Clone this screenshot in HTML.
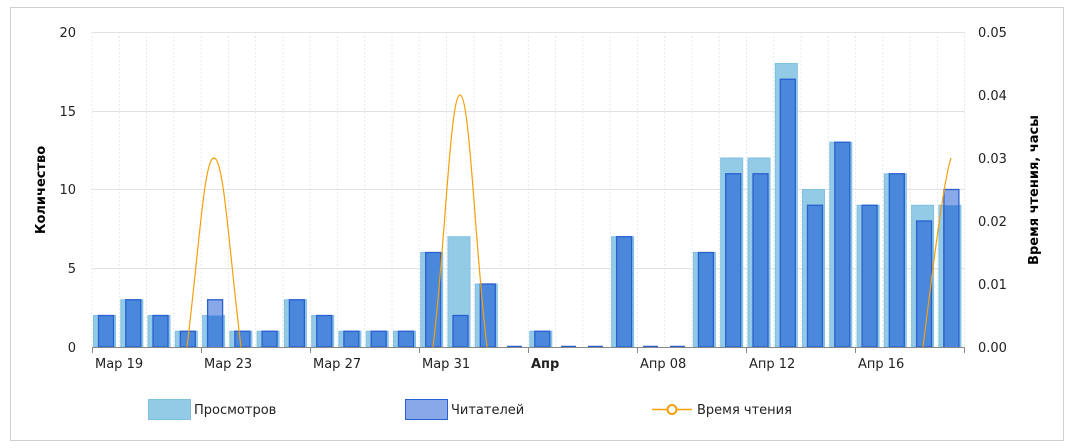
<!DOCTYPE html>
<html><head><meta charset="utf-8"><style>
html,body{margin:0;padding:0;background:#fff;}
svg{display:block;font-family:"DejaVu Sans","Liberation Sans",sans-serif;}
</style></head><body>
<svg width="1072" height="448" viewBox="0 0 1072 448" xmlns="http://www.w3.org/2000/svg">
<rect x="10.5" y="7.5" width="1053" height="433" fill="#fff" stroke="#d0d0d0"/>
<g stroke="#e8e8e8" stroke-dasharray="2,2">
<line x1="92" y1="32" x2="92" y2="347"/><line x1="119.3" y1="32" x2="119.3" y2="347"/><line x1="146.5" y1="32" x2="146.5" y2="347"/><line x1="173.8" y1="32" x2="173.8" y2="347"/><line x1="201.1" y1="32" x2="201.1" y2="347"/><line x1="228.4" y1="32" x2="228.4" y2="347"/><line x1="255.6" y1="32" x2="255.6" y2="347"/><line x1="282.9" y1="32" x2="282.9" y2="347"/><line x1="310.2" y1="32" x2="310.2" y2="347"/><line x1="337.4" y1="32" x2="337.4" y2="347"/><line x1="364.7" y1="32" x2="364.7" y2="347"/><line x1="392" y1="32" x2="392" y2="347"/><line x1="419.2" y1="32" x2="419.2" y2="347"/><line x1="446.5" y1="32" x2="446.5" y2="347"/><line x1="473.8" y1="32" x2="473.8" y2="347"/><line x1="501" y1="32" x2="501" y2="347"/><line x1="528.3" y1="32" x2="528.3" y2="347"/><line x1="555.6" y1="32" x2="555.6" y2="347"/><line x1="582.9" y1="32" x2="582.9" y2="347"/><line x1="610.1" y1="32" x2="610.1" y2="347"/><line x1="637.4" y1="32" x2="637.4" y2="347"/><line x1="664.7" y1="32" x2="664.7" y2="347"/><line x1="691.9" y1="32" x2="691.9" y2="347"/><line x1="719.2" y1="32" x2="719.2" y2="347"/><line x1="746.5" y1="32" x2="746.5" y2="347"/><line x1="773.8" y1="32" x2="773.8" y2="347"/><line x1="801" y1="32" x2="801" y2="347"/><line x1="828.3" y1="32" x2="828.3" y2="347"/><line x1="855.6" y1="32" x2="855.6" y2="347"/><line x1="882.8" y1="32" x2="882.8" y2="347"/><line x1="910.1" y1="32" x2="910.1" y2="347"/><line x1="937.4" y1="32" x2="937.4" y2="347"/><line x1="964.5" y1="32" x2="964.5" y2="347"/>
</g>
<g stroke="#e2e2e2">
<line x1="92" y1="32.5" x2="965" y2="32.5"/><line x1="92" y1="111.5" x2="965" y2="111.5"/><line x1="92" y1="189.5" x2="965" y2="189.5"/><line x1="92" y1="268.5" x2="965" y2="268.5"/>
</g>
<g fill="#93cbe6" stroke="#80c0e0">
<rect x="93.5" y="315.5" width="22" height="31.5"/>
<rect x="120.8" y="299.75" width="22" height="47.25"/>
<rect x="148" y="315.5" width="22" height="31.5"/>
<rect x="175.3" y="331.25" width="22" height="15.75"/>
<rect x="202.6" y="315.5" width="22" height="31.5"/>
<rect x="229.9" y="331.25" width="22" height="15.75"/>
<rect x="257.1" y="331.25" width="22" height="15.75"/>
<rect x="284.4" y="299.75" width="22" height="47.25"/>
<rect x="311.7" y="315.5" width="22" height="31.5"/>
<rect x="338.9" y="331.25" width="22" height="15.75"/>
<rect x="366.2" y="331.25" width="22" height="15.75"/>
<rect x="393.5" y="331.25" width="22" height="15.75"/>
<rect x="420.7" y="252.5" width="22" height="94.5"/>
<rect x="448" y="236.75" width="22" height="110.25"/>
<rect x="475.3" y="284" width="22" height="63"/>
<rect x="529.8" y="331.25" width="22" height="15.75"/>
<rect x="611.6" y="236.75" width="22" height="110.25"/>
<rect x="693.4" y="252.5" width="22" height="94.5"/>
<rect x="720.7" y="158" width="22" height="189"/>
<rect x="748" y="158" width="22" height="189"/>
<rect x="775.3" y="63.5" width="22" height="283.5"/>
<rect x="802.5" y="189.5" width="22" height="157.5"/>
<rect x="829.8" y="142.25" width="22" height="204.75"/>
<rect x="857.1" y="205.25" width="22" height="141.75"/>
<rect x="884.3" y="173.75" width="22" height="173.25"/>
<rect x="911.6" y="205.25" width="22" height="141.75"/>
<rect x="938.9" y="205.25" width="22" height="141.75"/>
</g>
<g fill="#4a88dc" stroke="#2a5fd0" stroke-width="1.3">
<rect x="98.5" y="315.5" width="15" height="31.5"/>
<rect x="125.8" y="299.75" width="15" height="47.25"/>
<rect x="153" y="315.5" width="15" height="31.5"/>
<rect x="180.3" y="331.25" width="15" height="15.75"/>
<rect x="207.6" y="299.75" width="15" height="47.25" fill="#88a8e8"/>
<rect x="234.9" y="331.25" width="15" height="15.75"/>
<rect x="262.1" y="331.25" width="15" height="15.75"/>
<rect x="289.4" y="299.75" width="15" height="47.25"/>
<rect x="316.7" y="315.5" width="15" height="31.5"/>
<rect x="343.9" y="331.25" width="15" height="15.75"/>
<rect x="371.2" y="331.25" width="15" height="15.75"/>
<rect x="398.5" y="331.25" width="15" height="15.75"/>
<rect x="425.7" y="252.5" width="15" height="94.5"/>
<rect x="453" y="315.5" width="15" height="31.5"/>
<rect x="480.3" y="284" width="15" height="63"/>
<rect x="534.8" y="331.25" width="15" height="15.75"/>
<rect x="616.6" y="236.75" width="15" height="110.25"/>
<rect x="698.4" y="252.5" width="15" height="94.5"/>
<rect x="725.7" y="173.75" width="15" height="173.25"/>
<rect x="753" y="173.75" width="15" height="173.25"/>
<rect x="780.3" y="79.25" width="15" height="267.75"/>
<rect x="807.5" y="205.25" width="15" height="141.75"/>
<rect x="834.8" y="142.25" width="15" height="204.75"/>
<rect x="862.1" y="205.25" width="15" height="141.75"/>
<rect x="889.3" y="173.75" width="15" height="173.25"/>
<rect x="916.6" y="221" width="15" height="126"/>
<rect x="943.9" y="189.5" width="15" height="157.5" fill="#88a8e8"/>
</g>
<rect x="208.2" y="315.5" width="13.8" height="31.5" fill="#4a88dc"/>
<rect x="944.5" y="205.25" width="13.8" height="141.75" fill="#4a88dc"/>
<g stroke="#2a5fd0" stroke-width="1.3"><line x1="207.6" y1="315.5" x2="207.6" y2="347"/><line x1="222.6" y1="315.5" x2="222.6" y2="347"/><line x1="943.9" y1="205" x2="943.9" y2="347"/><line x1="958.9" y1="205" x2="958.9" y2="347"/></g>
<g stroke="#2a5fd0" stroke-width="1.5"><line x1="507" y1="346.5" x2="522" y2="346.5"/><line x1="561" y1="346.5" x2="576" y2="346.5"/><line x1="588" y1="346.5" x2="603" y2="346.5"/><line x1="643" y1="346.5" x2="658" y2="346.5"/><line x1="670" y1="346.5" x2="685" y2="346.5"/></g>
<g fill="none" stroke="#f5a00a" stroke-width="1.2">
<path d="M187 347 C199 250,204 158,214 158 C224 158,229 250,241 347"/>
<path d="M433 347 C445 250,450 95,460 95 C470 95,475 250,487 347"/>
<path d="M923 347 C935 250,944 180,951 158"/>
</g>
<line x1="92" y1="347.5" x2="965" y2="347.5" stroke="#888"/>
<g stroke="#888"><line x1="92.5" y1="347" x2="92.5" y2="353"/><line x1="201.5" y1="347" x2="201.5" y2="353"/><line x1="310.5" y1="347" x2="310.5" y2="353"/><line x1="419.5" y1="347" x2="419.5" y2="353"/><line x1="528.5" y1="347" x2="528.5" y2="353"/><line x1="637.5" y1="347" x2="637.5" y2="353"/><line x1="746.5" y1="347" x2="746.5" y2="353"/><line x1="855.5" y1="347" x2="855.5" y2="353"/><line x1="964.5" y1="347" x2="964.5" y2="353"/></g>
<g font-size="13" fill="#222" text-anchor="end">
<text x="76" y="37">20</text><text x="76" y="116">15</text><text x="76" y="194">10</text><text x="76" y="273">5</text><text x="76" y="352">0</text>
</g>
<g font-size="13" fill="#222">
<text x="978" y="37">0.05</text><text x="978" y="100">0.04</text><text x="978" y="163">0.03</text><text x="978" y="226">0.02</text><text x="978" y="289">0.01</text><text x="978" y="352">0.00</text>
<text x="95" y="368">Мар 19</text><text x="204" y="368">Мар 23</text><text x="313" y="368">Мар 27</text><text x="422" y="368">Мар 31</text><text x="531" y="368" font-weight="bold">Апр</text><text x="640" y="368">Апр 08</text><text x="749" y="368">Апр 12</text><text x="858" y="368">Апр 16</text>
</g>
<text transform="translate(45,190) rotate(-90)" text-anchor="middle" font-size="13" font-weight="bold" fill="#000">Количество</text>
<text transform="translate(1038,190) rotate(-90)" text-anchor="middle" font-size="13" font-weight="bold" fill="#000">Время чтения, часы</text>
<rect x="148.5" y="399.5" width="42" height="20" fill="#93cbe6" stroke="#80c0e0"/>
<text x="194" y="414" font-size="13" fill="#222">Просмотров</text>
<rect x="405.5" y="399.5" width="42" height="20" fill="#88a8e8" stroke="#2a5fd0"/>
<text x="451" y="414" font-size="13" fill="#222">Читателей</text>
<line x1="652" y1="409.5" x2="692" y2="409.5" stroke="#f5a00a" stroke-width="1.5"/>
<circle cx="672" cy="409.5" r="4.5" fill="#fff" stroke="#f5a00a" stroke-width="2"/>
<text x="697" y="414" font-size="13" fill="#222">Время чтения</text>
</svg>
</body></html>
